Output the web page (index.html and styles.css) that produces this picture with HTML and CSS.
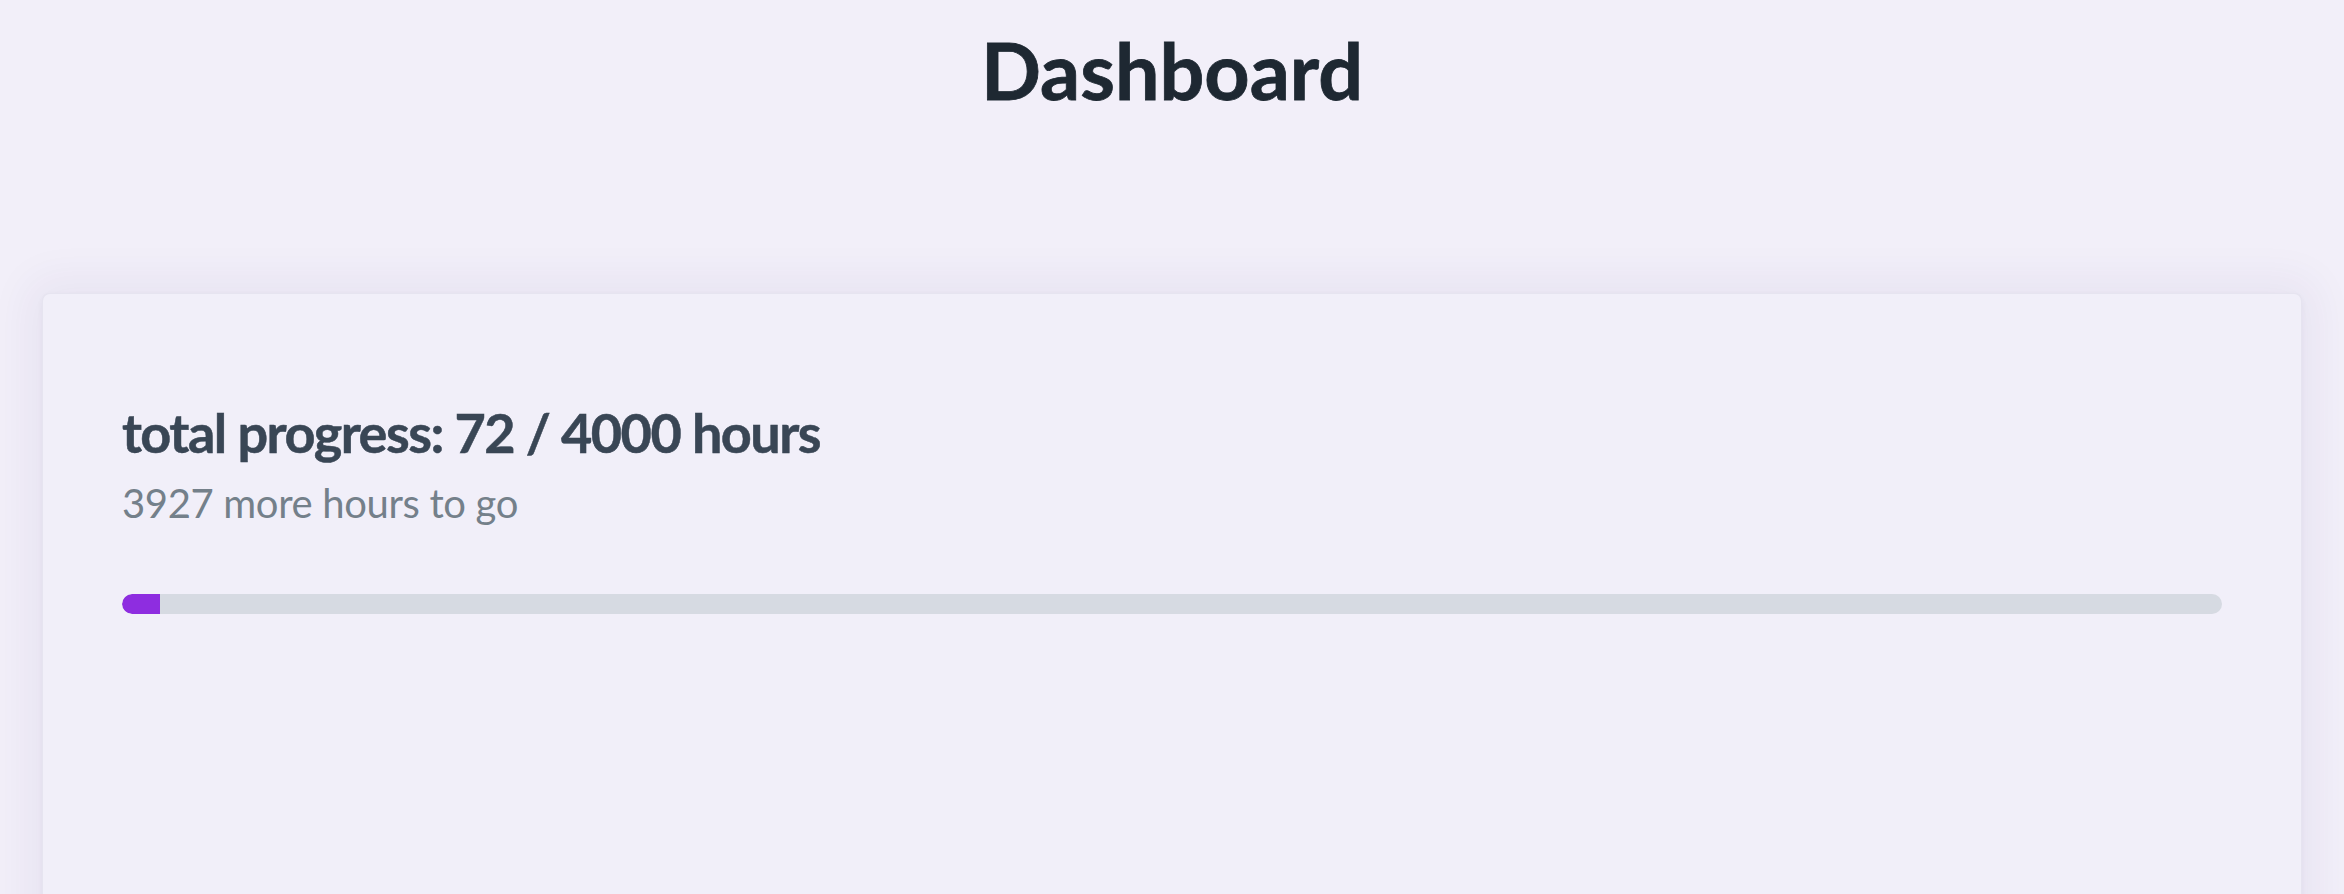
FILE: index.html
```html
<!DOCTYPE html>
<html lang="en">
<head>
<meta charset="utf-8">
<title>Dashboard</title>
<link rel="stylesheet" href="styles.css">
</head>
<body>
<main class="page">
  <h1 class="title">Dashboard</h1>
  <section class="card">
    <h2 class="progress-title">total progress: 72 / 4000 hours</h2>
    <p class="progress-sub">3927 more hours to go</p>
    <div class="bar">
      <div class="bar-fill" style="width: 1.8%"></div>
    </div>
  </section>
</main>
</body>
</html>
```

FILE: styles.css
```css
html, body {
  margin: 0;
  padding: 0;
  background: #f2eff9;
  height: 100%;
  overflow: hidden;
}

.page {
  font-family: Lato, "Noto Sans", sans-serif;
  padding: 0 42px;
}

.title {
  margin: 22px 0 0;
  font-size: 79px;
  line-height: 96px;
  font-weight: 700;
  color: #1e2832;
  text-align: center;
  -webkit-text-stroke: 0.8px #1e2832;
}

.card {
  margin-top: 175px;
  min-height: 800px;
  box-sizing: border-box;
  padding: 106px 79px 0;
  background: #f1eff9;
  border: 1px solid rgba(40, 30, 80, 0.05);
  border-radius: 8px;
  box-shadow: 0 0 44px 14px rgba(60, 40, 110, 0.055), 0 2px 6px rgba(60, 40, 110, 0.04);
}

.progress-title {
  margin: 0;
  font-size: 54px;
  line-height: 65px;
  font-weight: 700;
  color: #394655;
  letter-spacing: -1.5px;
  -webkit-text-stroke: 0.5px #394655;
}

.progress-sub {
  margin: 14px 0 0;
  font-size: 40px;
  line-height: 48px;
  font-weight: 400;
  color: #74808a;
  letter-spacing: -0.35px;
}

.bar {
  margin-top: 67px;
  height: 20px;
  border-radius: 10px;
  background: #d6dae2;
  overflow: hidden;
}

.bar-fill {
  height: 100%;
  background: #8e2de0;
  border-radius: 10px 0 0 10px;
}
```
